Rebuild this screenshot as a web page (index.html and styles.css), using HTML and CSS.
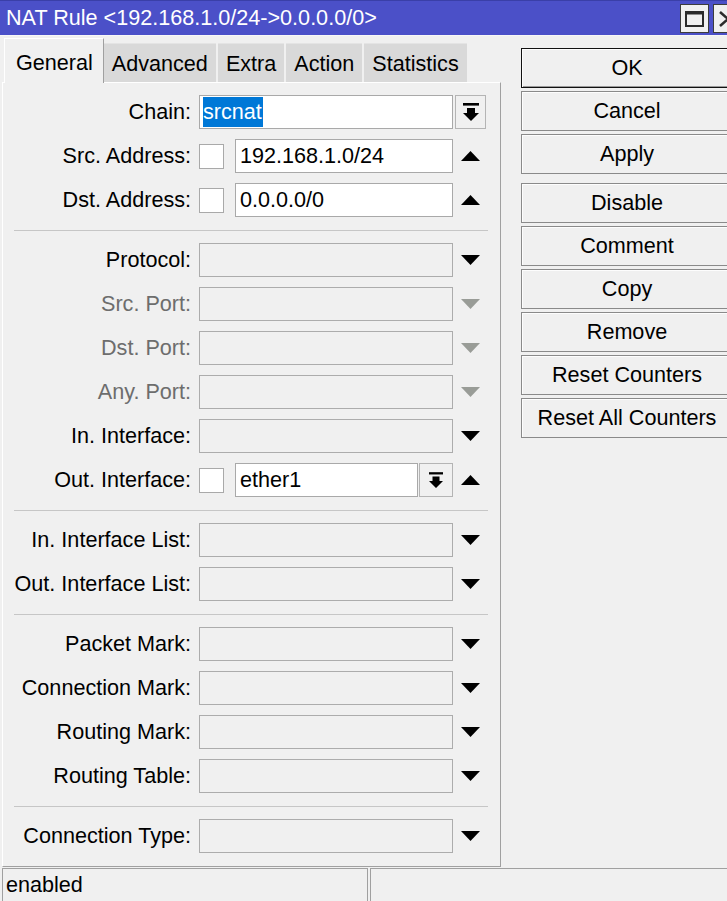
FILE: index.html
```html
<!DOCTYPE html>
<html>
<head>
<meta charset="utf-8">
<title>NAT Rule</title>
<link rel="stylesheet" href="styles.css">
</head>
<body>
<div class="window">
  <div class="titlebar">
    <span class="title">NAT Rule &lt;192.168.1.0/24-&gt;0.0.0.0/0&gt;</span>
    <div class="wincontrols">
      <div class="wbtn"><svg width="19" height="16" viewBox="0 0 19 16"><path d="M0 0H19V16H0Z M2 3.5V14H17V3.5Z" fill="#2b2b2b" fill-rule="evenodd"/></svg></div>
      <div class="wbtn"><svg width="18" height="16" viewBox="0 0 18 16"><path d="M1 1L17 15M17 1L1 15" stroke="#2b2b2b" stroke-width="2.6"/></svg></div>
    </div>
  </div>
  <div class="main">
    <div class="leftcol">
      <div class="tabs">
        <div class="tab active">General</div>
        <div class="tab">Advanced</div>
        <div class="tab">Extra</div>
        <div class="tab">Action</div>
        <div class="tab">Statistics</div>
      </div>
      <div class="panel">
        <div class="row">
          <div class="label">Chain:</div>
          <div class="field white"><span class="sel">srcnat</span></div>
          <div class="ctl"><div class="ddbtn"><svg class="ddicon" width="16" height="19" viewBox="0 0 16 19"><rect x="0" y="0" width="16" height="2.6"/><path d="M4 5H12V10H16L8 18L0 10H4Z"/></svg></div></div>
        </div>
        <div class="row">
          <div class="label">Src. Address:</div>
          <div class="combo"><div class="check"></div><div class="field white">192.168.1.0/24</div></div>
          <div class="ctl"><svg class="tri" width="19" height="10" viewBox="0 0 19 10"><path d="M9.5 0L19 10H0Z"/></svg></div>
        </div>
        <div class="row">
          <div class="label">Dst. Address:</div>
          <div class="combo"><div class="check"></div><div class="field white">0.0.0.0/0</div></div>
          <div class="ctl"><svg class="tri" width="19" height="10" viewBox="0 0 19 10"><path d="M9.5 0L19 10H0Z"/></svg></div>
        </div>
        <div class="sep"></div>
        <div class="row">
          <div class="label">Protocol:</div>
          <div class="field"></div>
          <div class="ctl"><svg class="tri" width="19" height="10" viewBox="0 0 19 10"><path d="M0 0H19L9.5 10Z"/></svg></div>
        </div>
        <div class="row">
          <div class="label dis">Src. Port:</div>
          <div class="field"></div>
          <div class="ctl"><svg class="tri dis" width="19" height="10" viewBox="0 0 19 10"><path d="M0 0H19L9.5 10Z"/></svg></div>
        </div>
        <div class="row">
          <div class="label dis">Dst. Port:</div>
          <div class="field"></div>
          <div class="ctl"><svg class="tri dis" width="19" height="10" viewBox="0 0 19 10"><path d="M0 0H19L9.5 10Z"/></svg></div>
        </div>
        <div class="row">
          <div class="label dis">Any. Port:</div>
          <div class="field"></div>
          <div class="ctl"><svg class="tri dis" width="19" height="10" viewBox="0 0 19 10"><path d="M0 0H19L9.5 10Z"/></svg></div>
        </div>
        <div class="row">
          <div class="label">In. Interface:</div>
          <div class="field"></div>
          <div class="ctl"><svg class="tri" width="19" height="10" viewBox="0 0 19 10"><path d="M0 0H19L9.5 10Z"/></svg></div>
        </div>
        <div class="row">
          <div class="label">Out. Interface:</div>
          <div class="combo"><div class="check"></div><div class="field white">ether1</div><div class="ddbtn small"><svg class="ddicon" width="14" height="17" viewBox="0 0 16 19"><rect x="0" y="0" width="16" height="2.6"/><path d="M4 5H12V10H16L8 18L0 10H4Z"/></svg></div></div>
          <div class="ctl"><svg class="tri" width="19" height="10" viewBox="0 0 19 10"><path d="M9.5 0L19 10H0Z"/></svg></div>
        </div>
        <div class="sep"></div>
        <div class="row">
          <div class="label">In. Interface List:</div>
          <div class="field"></div>
          <div class="ctl"><svg class="tri" width="19" height="10" viewBox="0 0 19 10"><path d="M0 0H19L9.5 10Z"/></svg></div>
        </div>
        <div class="row">
          <div class="label">Out. Interface List:</div>
          <div class="field"></div>
          <div class="ctl"><svg class="tri" width="19" height="10" viewBox="0 0 19 10"><path d="M0 0H19L9.5 10Z"/></svg></div>
        </div>
        <div class="sep"></div>
        <div class="row">
          <div class="label">Packet Mark:</div>
          <div class="field"></div>
          <div class="ctl"><svg class="tri" width="19" height="10" viewBox="0 0 19 10"><path d="M0 0H19L9.5 10Z"/></svg></div>
        </div>
        <div class="row">
          <div class="label">Connection Mark:</div>
          <div class="field"></div>
          <div class="ctl"><svg class="tri" width="19" height="10" viewBox="0 0 19 10"><path d="M0 0H19L9.5 10Z"/></svg></div>
        </div>
        <div class="row">
          <div class="label">Routing Mark:</div>
          <div class="field"></div>
          <div class="ctl"><svg class="tri" width="19" height="10" viewBox="0 0 19 10"><path d="M0 0H19L9.5 10Z"/></svg></div>
        </div>
        <div class="row">
          <div class="label">Routing Table:</div>
          <div class="field"></div>
          <div class="ctl"><svg class="tri" width="19" height="10" viewBox="0 0 19 10"><path d="M0 0H19L9.5 10Z"/></svg></div>
        </div>
        <div class="sep"></div>
        <div class="row">
          <div class="label">Connection Type:</div>
          <div class="field"></div>
          <div class="ctl"><svg class="tri" width="19" height="10" viewBox="0 0 19 10"><path d="M0 0H19L9.5 10Z"/></svg></div>
        </div>
      </div>
    </div>
    <div class="buttons">
      <div class="btn default">OK</div>
      <div class="btn">Cancel</div>
      <div class="btn">Apply</div>
      <div class="btn group">Disable</div>
      <div class="btn">Comment</div>
      <div class="btn">Copy</div>
      <div class="btn">Remove</div>
      <div class="btn">Reset Counters</div>
      <div class="btn">Reset All Counters</div>
    </div>
  </div>
  <div class="statusbar">
    <div class="cell first">enabled</div>
    <div class="cell second"></div>
  </div>
</div>
</body>
</html>
```
FILE: styles.css
```css
html, body {
  margin: 0;
  padding: 0;
  background: #f0f0f0;
  overflow: hidden;
}
body {
  font-family: "Liberation Sans", Arial, sans-serif;
  font-size: 21.6px;
  color: #000;
}
.window {
  width: 727px;
  height: 901px;
  overflow: hidden;
  background: #f0f0f0;
}
.titlebar {
  height: 36px;
  background: #4b50c8;
  border-top: 1px solid #3a3fa8;
  box-sizing: border-box;
  display: flex;
  align-items: center;
  overflow: hidden;
  border-bottom: 1px solid #f7f7f7;
}
.title {
  flex: 1;
  color: #fff;
  padding-left: 6px;
  white-space: nowrap;
  line-height: 26px;
}
.wincontrols {
  width: 47px;
  flex-shrink: 0;
  display: flex;
  gap: 4px;
  overflow: hidden;
  align-self: flex-start;
  margin-top: 3px;
}
.wbtn {
  width: 29px;
  height: 29px;
  flex-shrink: 0;
  box-sizing: border-box;
  background: #f0f0f0;
  border: 1px solid #3c3c3c;
  display: flex;
  align-items: center;
  justify-content: center;
}
.main {
  height: 832px;
  display: flex;
}
.leftcol {
  margin-left: 2px;
  width: 499px;
  padding-top: 2px;
  flex-shrink: 0;
}
.tabs {
  height: 44px;
  display: flex;
  align-items: flex-end;
  padding-left: 2px;
}
.tab {
  height: 39px;
  box-sizing: border-box;
  padding: 2px 8px 0 8px;
  background: #d9d9d9;
  display: flex;
  align-items: center;
  margin-right: 2px;
  white-space: nowrap;
  border-top: 1px solid #e4e4e4;
}
.tab.active {
  height: 45px;
  margin-bottom: -1px;
  position: relative;
  z-index: 1;
  background: #f0f0f0;
  padding: 4px 10px 0 11px;
  border-top: 1px solid #ffffff;
  border-left: 1px solid #ffffff;
  border-right: 1px solid #a0a0a0;
  margin-right: 0;
}
.panel {
  height: 785px;
  box-sizing: border-box;
  border-top: 1px solid #ffffff;
  border-left: 1px solid #ffffff;
  border-right: 1px solid #a0a0a0;
  border-bottom: 1px solid #a0a0a0;
  padding-top: 7px;
}
.row {
  height: 44px;
  display: grid;
  grid-template-columns: 196px 254px 35px;
  align-items: center;
}
.label {
  text-align: right;
  white-space: nowrap;
  padding-right: 8px;
}
.label.dis {
  color: #6d6d6d;
}
.field {
  height: 34px;
  box-sizing: border-box;
  border: 1px solid #acacac;
  background: #f0f0f0;
  display: flex;
  align-items: center;
  padding-left: 4px;
  white-space: nowrap;
  overflow: hidden;
}
.field.white {
  background: #ffffff;
  border-color: #a9a9a9;
}
.combo {
  display: flex;
  align-items: center;
  height: 34px;
}
.combo .field {
  flex: 1;
  margin-left: 11px;
}
.check {
  width: 25px;
  height: 25px;
  box-sizing: border-box;
  background: #fff;
  border: 1px solid #a9a9a9;
  flex-shrink: 0;
}
.sel {
  background: #0078d7;
  color: #fff;
  line-height: 30px;
  display: inline-block;
  padding-right: 1px;
  margin-left: -1px;
}
.ctl {
  display: flex;
  justify-content: center;
  align-items: center;
}
.ddbtn {
  width: 31px;
  height: 34px;
  box-sizing: border-box;
  border: 1px solid #b4b4b4;
  background: #f0f0f0;
  display: flex;
  align-items: center;
  justify-content: center;
  flex-shrink: 0;
}
.ddbtn.small {
  width: 34px;
  margin-left: 1px;
}
.ddicon {
  fill: #000;
}
.tri {
  fill: #000;
}
.tri.dis {
  fill: #999c97;
}
.sep {
  height: 16px;
  display: flex;
  align-items: center;
  padding: 0 12px 0 11px;
}
.sep::before {
  content: "";
  flex: 1;
  height: 1px;
  background: #c6c6c6;
}
.buttons {
  margin-left: 20px;
  padding-top: 12px;
  display: flex;
  flex-direction: column;
  gap: 3px;
  width: 212px;
  flex-shrink: 0;
}
.btn {
  height: 40px;
  box-sizing: border-box;
  border: 1px solid #8a8a8a;
  background: #f0f0f0;
  display: flex;
  align-items: center;
  justify-content: center;
  white-space: nowrap;
  box-shadow: inset 1px 1px 0 #fdfdfd;
}
.btn.default {
  border: 1px solid #111;
  box-shadow: inset 1px 1px 0 #fdfdfd, inset -1px -1px 0 #9a9a9a;
}
.btn.group {
  margin-top: 6px;
}
.statusbar {
  height: 33px;
  display: flex;
  gap: 2px;
  padding-left: 2px;
}
.cell {
  box-sizing: border-box;
  border-top: 1px solid #a0a0a0;
  border-left: 1px solid #a0a0a0;
  height: 33px;
  display: flex;
  align-items: center;
  padding-left: 3px;
  white-space: nowrap;
}
.cell.first {
  width: 366px;
  border-right: 1px solid #a0a0a0;
}
.cell.second {
  flex: 1;
}
```
